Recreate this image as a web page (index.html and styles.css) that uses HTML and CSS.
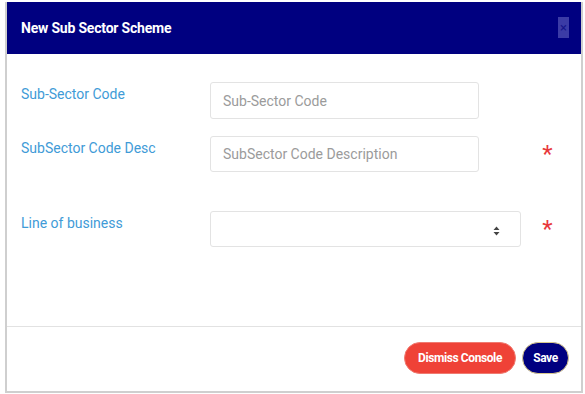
FILE: index.html
```html
<!DOCTYPE html>
<html>
<head>
<meta charset="utf-8">
<link rel="stylesheet" href="styles.css">
</head>
<body>
<div class="modal">
  <div class="modal-header">
    <h1 class="modal-title">New Sub Sector Scheme</h1>
    <span class="close">×</span>
  </div>
  <div class="modal-body">
    <div class="row row-first">
      <label class="label">Sub-Sector Code</label>
      <div class="field"><input class="input" placeholder="Sub-Sector Code"></div>
      <span class="req"></span>
    </div>
    <div class="row row-second">
      <label class="label">SubSector Code Desc</label>
      <div class="field"><input class="input" placeholder="SubSector Code Description"></div>
      <span class="req">*</span>
    </div>
    <div class="row row-third">
      <label class="label">Line of business</label>
      <div class="field">
        <div class="select">
          <svg class="arrows" width="7" height="10" viewBox="0 0 7 10"><path d="M3.5 0.5 L6.5 4 L0.5 4 Z M3.5 9.5 L6.5 6 L0.5 6 Z" fill="#444"/></svg>
        </div>
      </div>
      <span class="req">*</span>
    </div>
  </div>
  <div class="modal-footer">
    <button class="btn btn-dismiss">Dismiss Console</button>
    <button class="btn btn-save">Save</button>
  </div>
</div>
</body>
</html>
```
FILE: styles.css
```css
* { box-sizing: border-box; }
html, body { margin: 0; padding: 0; background: #fff; }
body { font-family: Roboto, "Liberation Sans", Arial, sans-serif; width: 585px; height: 394px; overflow: hidden; }

.modal {
  margin: 2px 2px 1px 5px;
  width: 578px;
  height: 391px;
  border: 2px solid #cfcfcf;
  border-top: none;
  display: flex;
  flex-direction: column;
}

.modal-header {
  height: 52px;
  background: #000080;
  display: flex;
  align-items: center;
  justify-content: space-between;
  padding: 0 12px 0 14px;
  flex-shrink: 0;
}
.modal-title {
  margin: 0;
  color: #fff;
  font-size: 14px;
  font-weight: 700;
  letter-spacing: -0.2px;
}
.close {
  width: 11px;
  height: 21px;
  background: #3b3ba6;
  color: #15158a;
  font-size: 13px;
  line-height: 21px;
  text-align: center;
  margin-top: -1px;
}

.modal-body {
  flex: 1;
  padding: 28px 0 0 14px;
}
.row {
  display: grid;
  grid-template-columns: 189px 311px 52px;
  align-items: start;
}
.row-second { margin-top: 17px; }
.row-third { margin-top: 39px; }
.label {
  color: #3f9bd7;
  font-size: 14px;
  line-height: 20px;
  padding-top: 2px;
}
.input {
  display: block;
  width: 269px;
  height: 37px;
  border: 1px solid #e3e3e3;
  border-radius: 3px;
  padding: 0 12px;
  font-family: Roboto, "Liberation Sans", Arial, sans-serif;
  font-size: 14px;
  color: #555;
  outline: none;
}
.row-second .input { height: 36px; }
.input::placeholder { color: #9b9b9b; }
.select {
  width: 311px;
  height: 36px;
  border: 1px solid #e3e3e3;
  border-radius: 3px;
  display: flex;
  align-items: center;
  justify-content: flex-end;
  padding-right: 20px;
}
.arrows { display: block; margin-top: 3px; }
.req {
  color: #e8383b;
  font-size: 24px;
  line-height: 24px;
  text-align: center;
  padding-top: 6px;
  padding-left: 1px;
}

.modal-footer {
  height: 65px;
  border-top: 1px solid #e2e2e2;
  display: flex;
  justify-content: flex-end;
  align-items: center;
  gap: 6px;
  padding: 0 12px 2px 0;
  flex-shrink: 0;
}
.btn {
  height: 32px;
  border-radius: 16px;
  color: #fff;
  font-family: Roboto, "Liberation Sans", Arial, sans-serif;
  font-weight: 700;
  font-size: 12px;
  letter-spacing: -0.4px;
  padding: 0;
  cursor: pointer;
}
.btn-dismiss {
  width: 112px;
  background: #ef4237;
  border: 1px solid #f07a70;
}
.btn-save {
  width: 47px;
  background: #000080;
  border: 1px solid #d8c98e;
}
```
